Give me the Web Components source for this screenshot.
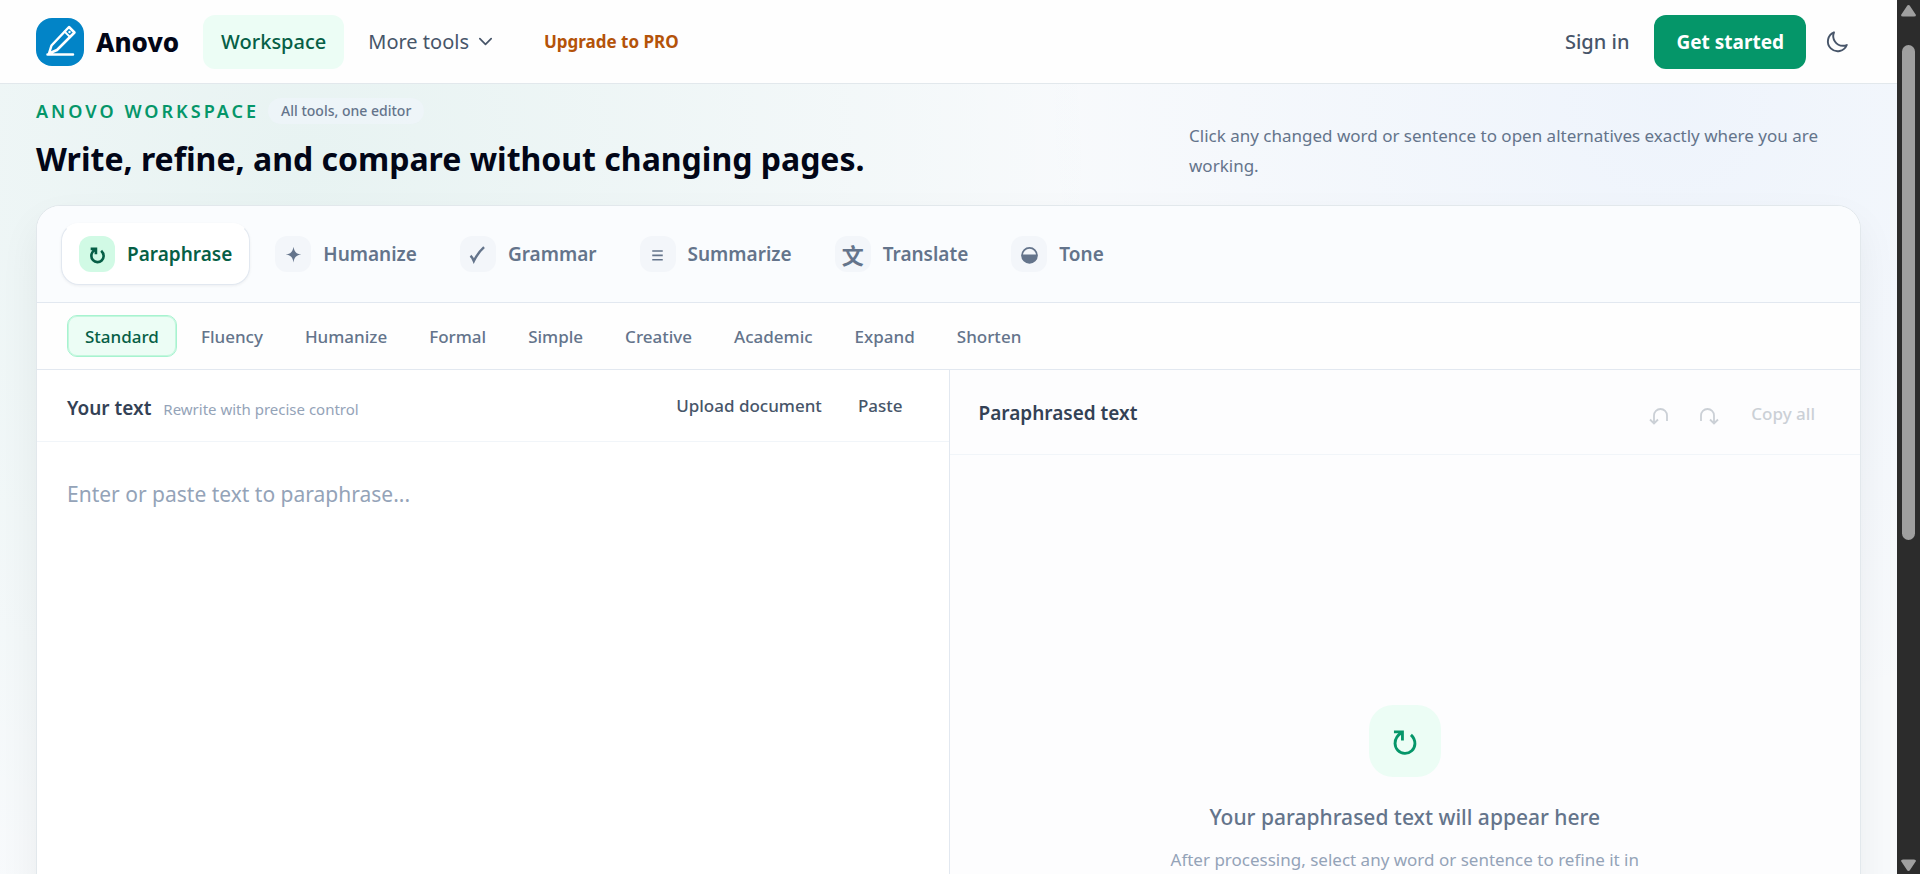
<!DOCTYPE html>
<html lang="en">
<head>
<meta charset="utf-8">
<title>Anovo Workspace</title>
<style>
  body { margin: 0; font-family: "Noto Sans", "Open Sans", sans-serif; color: #020617; }
</style>
</head>
<body>
<anovo-app></anovo-app>
<script>
const define = (name, html, setup) => {
  const template = document.createElement('template');
  template.innerHTML = `<style>
    *, ::before, ::after { box-sizing: border-box; }
    button, textarea { font: inherit; color: inherit; border: 0; margin: 0; padding: 0; background: none; }
    a { color: inherit; text-decoration: none; }
    svg { display: block; }
    h1, h2, h3, p { margin: 0; }
  </style>` + html;
  customElements.define(name, class extends HTMLElement {
    connectedCallback() {
      if (this.shadowRoot) return;
      this.attachShadow({ mode: 'open' }).append(template.content.cloneNode(true));
      if (setup) setup(this, this.shadowRoot);
    }
  });
};

const icons = {
  refresh: '<path d="M4.200 5.600h6v6M9.800 6C6.500 8 5 10.600 5 13.500a7 7 0 0 0 14 .5c0-2.600-1-4.700-2.800-6.300" fill="none" stroke="currentColor" stroke-width="var(--stroke, 2)"/>',
  spark: '<path d="M12 3c1 6 3 8 9 9c-6 1-8 3-9 9c-1-6-3-8-9-9c6-1 8-3 9-9z" fill="currentColor"/>',
  check: '<path d="M4 13.500c1.800 1.500 2.800 3.500 3.800 6C11 13 14.500 8 19.500 3.500" fill="none" stroke="currentColor" stroke-width="2.800"/>',
  lines: '<path d="M6 8h12M6 13h12M6 18h12" fill="none" stroke="currentColor" stroke-width="1.900"/>',
  tone: '<circle cx="12" cy="13" r="8.500" fill="none" stroke="currentColor" stroke-width="2"/><path d="M3 12h18a9 9 0 0 1-18 1z" fill="currentColor"/>',
  undo: '<path d="M20 20v-5.500a6.500 6.500 0 0 0-13 0V22M3 18.500l4 4l4-4" fill="none" stroke="currentColor" stroke-width="1.800"/>',
  redo: '<path d="M4 20v-5.500a6.500 6.500 0 0 1 13 0V22M13 18.500l4 4l4-4" fill="none" stroke="currentColor" stroke-width="1.800"/>',
  moon: '<path d="M21.800 15A9.700 9.700 0 0 1 18 15.800 9.800 9.800 0 0 1 9 2.300 9.800 9.800 0 1 0 21.800 15z" fill="none" stroke="currentColor" stroke-width="1.900" stroke-linejoin="round"/>',
  chevron: '<path d="M4 8l8 8l8-8" fill="none" stroke="currentColor" stroke-width="2.400" stroke-linecap="round" stroke-linejoin="round"/>'
};

define('ui-icon', `<style>
  :host { display: inline-block; flex: none; width: var(--size, 24px); height: var(--size, 24px); }
  svg { width: 100%; height: 100%; }
</style><svg viewBox="0 0 24 24" aria-hidden="true"></svg>`, (host, root) => {
  root.querySelector('svg').innerHTML = icons[host.getAttribute('name')];
});

define('anovo-header', `<style>
  :host { display: block; background: #fefefe; border-bottom: 1px solid #e2e8ec; }
  header { display: flex; align-items: center; padding: 14px 36px; height: 83px; font-size: 20px; }
  nav { display: flex; align-items: center; gap: 6px; margin-left: 24px; flex: 1; }
  .brand { display: flex; align-items: center; gap: 12px; font-size: 26px; font-weight: 800; }
  .logo { width: 48px; height: 48px; }
  .link { display: flex; align-items: center; gap: 8px; height: 54px; padding: 0 18px; border-radius: 12px; color: #475569; }
  .active { background: #ecfdf5; color: #065f46; font-weight: 500; }
  .pro { margin-left: 8px; font-size: 17px; font-weight: 700; color: #b45309; }
  .link ui-icon { --size: 17px; }
  .sign { color: #475569; font-weight: 500; }
  .start { height: 54px; padding: 0 22px; border-radius: 12px; background: #059669; color: #fff; font-size: 19px; font-weight: 700; margin: 0 7px; }
  .theme { display: grid; place-items: center; width: 48px; height: 46px; color: #475569; }
</style>
<header>
  <a class="brand" href="#home">
    <svg class="logo" viewBox="0 0 48 48" aria-hidden="true">
      <rect width="48" height="48" rx="16" fill="#0284c7"/>
      <g fill="none" stroke="#fff" stroke-width="2.500" stroke-linecap="round" stroke-linejoin="round">
        <path d="M11.500 36.500H37M13 35.500l2.500-8L33 9l5.500 5.500L21 32z"/>
        <path d="M28.500 13.500l5.500 5.500" stroke-width="1.800"/>
      </g>
      <circle cx="33.500" cy="14" r="1.200" fill="#fff"/>
    </svg><span>Anovo</span></a>
  <nav>
    <a class="link active" href="#workspace">Workspace</a>
    <button class="link">More tools<ui-icon name="chevron"></ui-icon></button>
    <a class="link pro" href="#pro">Upgrade to PRO</a>
  </nav>
  <a class="link sign" href="#signin">Sign in</a>
  <button class="start">Get started</button>
  <button class="theme" aria-label="Dark theme"><ui-icon name="moon"></ui-icon></button>
</header>`);

define('page-intro', `<style>
  :host { display: flex; align-items: flex-end; justify-content: space-between; padding: 14px 0 24px; }
  .meta { display: flex; align-items: center; gap: 9px; height: 26px; margin-bottom: 12px; }
  .eyebrow { font-size: 18px; font-weight: 600; letter-spacing: 3px; color: #059669; white-space: nowrap; }
  .pill { padding: 0 13px; border-radius: 13px; line-height: 26px; font-size: 14px; font-weight: 500; color: #64748b; background: rgba(241, 245, 253, .5); }
  h1 { font-size: 32px; line-height: 45px; font-weight: 700; }
  .desc { width: 672px; font-size: 17px; line-height: 30px; color: #64748b; }
</style>
<div>
  <div class="meta"><span class="eyebrow">ANOVO WORKSPACE</span><span class="pill">All tools, one editor</span></div>
  <h1>Write, refine, and compare without changing pages.</h1>
</div>
<p class="desc">Click any changed word or sentence to open alternatives exactly where you are working.</p>`);

define('tool-tab', `<style>
  :host { display: block; }
  button { display: flex; align-items: center; gap: 12px; height: 62px; padding: 0 17px; border: 1px solid transparent; border-radius: 18px; font-size: 19px; font-weight: 600; color: #64748b; white-space: nowrap; }
  .box { display: grid; place-items: center; width: 36px; height: 36px; border-radius: 12px; background: #f3f6fa; --size: 21px; --stroke: 3; }
  :host([active]) button { background: #fff; color: #065f46; border-color: #fff #e2e8f0 #e2e8f0; box-shadow: 0 1px 3px rgba(15, 23, 42, .06); }
  :host([active]) .box { background: #d1fae5; }
</style>
<button><span class="box"><slot name="icon"></slot></span><slot></slot></button>`);

define('tool-tabs', `<style>
  :host { display: flex; gap: 7px; padding: 17px 24px; background: #fafcfe; border-bottom: 1px solid #e2e8f0; }
  .han { font: 700 22px/36px "Noto Sans CJK SC", sans-serif; }
</style>
<tool-tab active><ui-icon slot="icon" name="refresh"></ui-icon>Paraphrase</tool-tab>
<tool-tab><ui-icon slot="icon" name="spark"></ui-icon>Humanize</tool-tab>
<tool-tab><ui-icon slot="icon" name="check"></ui-icon>Grammar</tool-tab>
<tool-tab><ui-icon slot="icon" name="lines"></ui-icon>Summarize</tool-tab>
<tool-tab><span class="han" slot="icon">文</span>Translate</tool-tab>
<tool-tab><ui-icon slot="icon" name="tone"></ui-icon>Tone</tool-tab>`);

define('mode-bar', `<style>
  :host { display: flex; gap: 6px; padding: 12px 30px; background: #fefefe; border-bottom: 1px solid #e2e8f0; }
  button { height: 42px; padding: 0 17px; border: 1px solid transparent; border-radius: 10px; font-size: 17px; font-weight: 500; color: #64748b; }
  .on { background: #ecfdf5; border-color: #a7f3d0; color: #065f46; box-shadow: inset 0 0 0 1px #c3f7dd; }
</style>
<button class="on">Standard</button><button>Fluency</button><button>Humanize</button><button>Formal</button><button>Simple</button><button>Creative</button><button>Academic</button><button>Expand</button><button>Shorten</button>`);

define('source-pane', `<style>
  :host { display: flex; flex-direction: column; background: #fff; }
  .head { display: flex; align-items: center; padding: 0 30px; height: 72px; border-bottom: 1px solid #f1f5f9; }
  .label { display: flex; align-items: baseline; gap: 12px; flex: 1; padding-top: 4px; }
  label { font-size: 19px; font-weight: 600; color: #334155; }
  .hint { font-size: 15px; color: #94a3b8; }
  .actions { display: flex; gap: 4px; }
  .actions button { height: 42px; padding: 0 16px; font-size: 17px; font-weight: 500; color: #475569; }
  textarea { flex: 1; width: 100%; padding: 34px 30px; font-size: 21px; line-height: 36px; resize: none; outline: 0; overflow: hidden; }
  textarea::placeholder { color: #94a3b8; opacity: 1; }
</style>
<div class="head">
  <div class="label"><label for="source">Your text</label><span class="hint">Rewrite with precise control</span></div>
  <div class="actions"><button>Upload document</button><button>Paste</button></div>
</div>
<textarea id="source" placeholder="Enter or paste text to paraphrase..."></textarea>`);

define('result-pane', `<style>
  :host { display: block; background: #fdfdfe; border-left: 1px solid #e2e8f0; }
  .head { display: flex; align-items: center; gap: 4px; padding: 2px 30px 0 29px; height: 85px; border-bottom: 1px solid #f1f5f9; }
  h2 { flex: 1; font-size: 19px; font-weight: 600; color: #334155; }
  .head button { display: grid; place-items: center; height: 44px; min-width: 46px; color: #cbd0d6; --size: 24px; }
  .head .copy { padding: 0 15px; font-size: 17px; font-weight: 500; }
  .empty { display: flex; flex-direction: column; align-items: center; justify-content: center; min-height: 668px; text-align: center; }
  .tile { display: grid; place-items: center; width: 72px; height: 72px; border-radius: 24px; background: #ecfdf5; color: #059669; --size: 34px; }
  h3 { margin: 24px 0 12px; font-size: 21px; line-height: 33px; font-weight: 500; color: #64748b; }
  .empty p { font-size: 17px; line-height: 28px; color: #94a3b8; }
</style>
<div class="head">
  <h2>Paraphrased text</h2>
  <button disabled aria-label="Undo"><ui-icon name="undo"></ui-icon></button>
  <button disabled aria-label="Redo"><ui-icon name="redo"></ui-icon></button>
  <button disabled class="copy">Copy all</button>
</div>
<div class="empty">
  <div class="tile"><ui-icon name="refresh"></ui-icon></div>
  <h3>Your paraphrased text will appear here</h3>
  <p>After processing, select any word or sentence to refine it in</p>
</div>`);

define('workspace-card', `<style>
  :host { display: block; border: 1px solid #e2e8ec; border-radius: 24px; overflow: hidden; background: #fff; box-shadow: 0 18px 40px rgba(15, 23, 42, .06); }
  .editor { display: grid; grid-template-columns: 1fr 1fr; }
</style>
<tool-tabs></tool-tabs>
<mode-bar></mode-bar>
<div class="editor"><source-pane></source-pane><result-pane></result-pane></div>`);

define('scroll-rail', `<style>
  :host { display: flex; flex-direction: column; align-items: center; width: 23px; padding: 5px 0 3px; background: #2c2c2c; }
  svg { width: 15px; height: 12px; fill: #9f9f9f; }
  .track { flex: 1; width: 13px; margin: 28px 0; }
  .thumb { height: 63%; border-radius: 7px; background: #9f9f9f; }
</style>
<svg viewBox="0 0 15 12" aria-hidden="true"><path d="M7.500 0Q8.500 0 9 1l6 9q0 1.500-2 1.500H2Q0 11.500 0 10l6-9q.5-1 1.500-1z"/></svg>
<div class="track"><div class="thumb"></div></div>
<svg viewBox="0 0 15 12" aria-hidden="true"><path d="M7.500 12Q8.500 12 9 11l6-9Q15 .5 13 .5H2Q0 .5 0 2l6 9q.5 1 1.500 1z"/></svg>`);

define('anovo-app', `<style>
  :host { display: flex; height: 100vh; overflow: hidden; }
  .page { flex: 1; min-width: 0; overflow: hidden;
    background:
      radial-gradient(circle at 16% 160px, rgba(16, 150, 110, .07), transparent 800px),
      radial-gradient(circle at 88% 100px, rgba(59, 130, 246, .05), transparent 640px),
      #f8fafc; }
  main { padding: 0 36px; }
</style>
<div class="page">
  <anovo-header></anovo-header>
  <main><page-intro></page-intro><workspace-card></workspace-card></main>
</div>
<scroll-rail></scroll-rail>`);
</script>
</body>
</html>
